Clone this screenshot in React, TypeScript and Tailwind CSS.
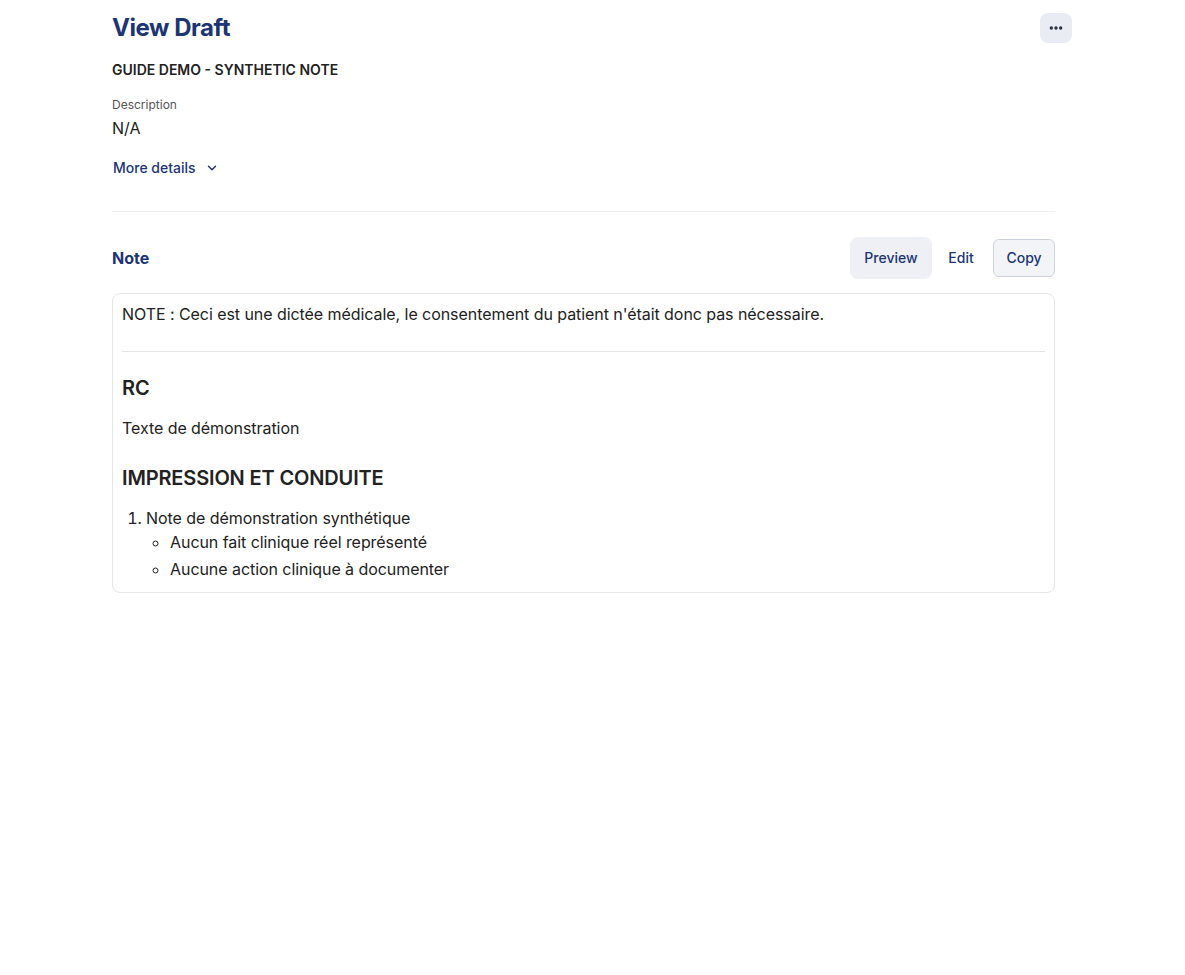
import { ChevronDown, MoreHorizontal } from "lucide-react";

const NAVY = "text-[#1c3575]";

function NoteBody() {
  return (
    <div className="rounded-lg border border-[#e4e6ea] px-[9px] pt-[8px] pb-[11px] text-base leading-6 tracking-[-0.06px] text-[#222]">
      <p>NOTE : Ceci est une dictée médicale, le consentement du patient n'était donc pas nécessaire.</p>
      <hr className="mt-[25px] border-[#e3e5e8]" />
      <h2 className="mt-[22px] text-xl leading-7 font-semibold tracking-[-0.15px]">RC</h2>
      <p className="mt-[14px]">Texte de démonstration</p>
      <h2 className="mt-[24px] text-xl leading-7 font-semibold tracking-[-0.15px]">IMPRESSION ET CONDUITE</h2>
      <ol className="mt-[14px] list-decimal pl-6">
        <li>
          Note de démonstration synthétique
          <ul className="list-[circle] space-y-[3px] pl-6">
            <li>Aucun fait clinique réel représenté</li>
            <li>Aucune action clinique à documenter</li>
          </ul>
        </li>
      </ol>
    </div>
  );
}

export default function App() {
  return (
    <div className="min-h-screen bg-white font-['Inter',sans-serif]">
      <div className="ml-[112px] w-[960px] pt-[13px]">
        <div className="flex h-[30px] items-center justify-between">
          <h1 className={`text-2xl leading-7 font-bold tracking-[-0.45px] ${NAVY}`}>View Draft</h1>
          <button className="flex h-[30px] w-8 items-center justify-center rounded-lg bg-[#e9ecf2] text-[#1f2937]">
            <MoreHorizontal size={16} strokeWidth={3} />
          </button>
        </div>

        <div className="pr-[17px]">
          <p className="mt-[17px] text-sm leading-5 font-semibold text-[#222]">GUIDE DEMO - SYNTHETIC NOTE</p>

          <p className="mt-[17px] text-xs leading-4 text-[#555]">Description</p>
          <p className="mt-[3px] text-base leading-6 text-[#222]">N/A</p>

          <button className={`mt-[18px] ml-px flex items-center gap-[9px] text-sm leading-5 font-medium ${NAVY}`}>
            More details
            <ChevronDown size={14} strokeWidth={2.5} />
          </button>

          <div className="mt-[33px] border-t border-[#eceef1]" />

          <div className="mt-[25px] flex h-[42px] items-center justify-between">
            <h3 className={`text-base leading-6 font-bold ${NAVY}`}>Note</h3>
            <div className="flex items-center text-sm font-medium">
              <button className={`h-[42px] w-[82px] rounded-lg bg-[#eef0f5] ${NAVY}`}>Preview</button>
              <button className={`h-[42px] w-[58px] rounded-lg ${NAVY}`}>Edit</button>
              <button className={`ml-[3px] h-[38px] w-[62px] rounded-md border border-[#cdd3de] bg-[#f2f4f8] ${NAVY}`}>
                Copy
              </button>
            </div>
          </div>

          <div className="mt-[14px]">
            <NoteBody />
          </div>
        </div>
      </div>
    </div>
  );
}
